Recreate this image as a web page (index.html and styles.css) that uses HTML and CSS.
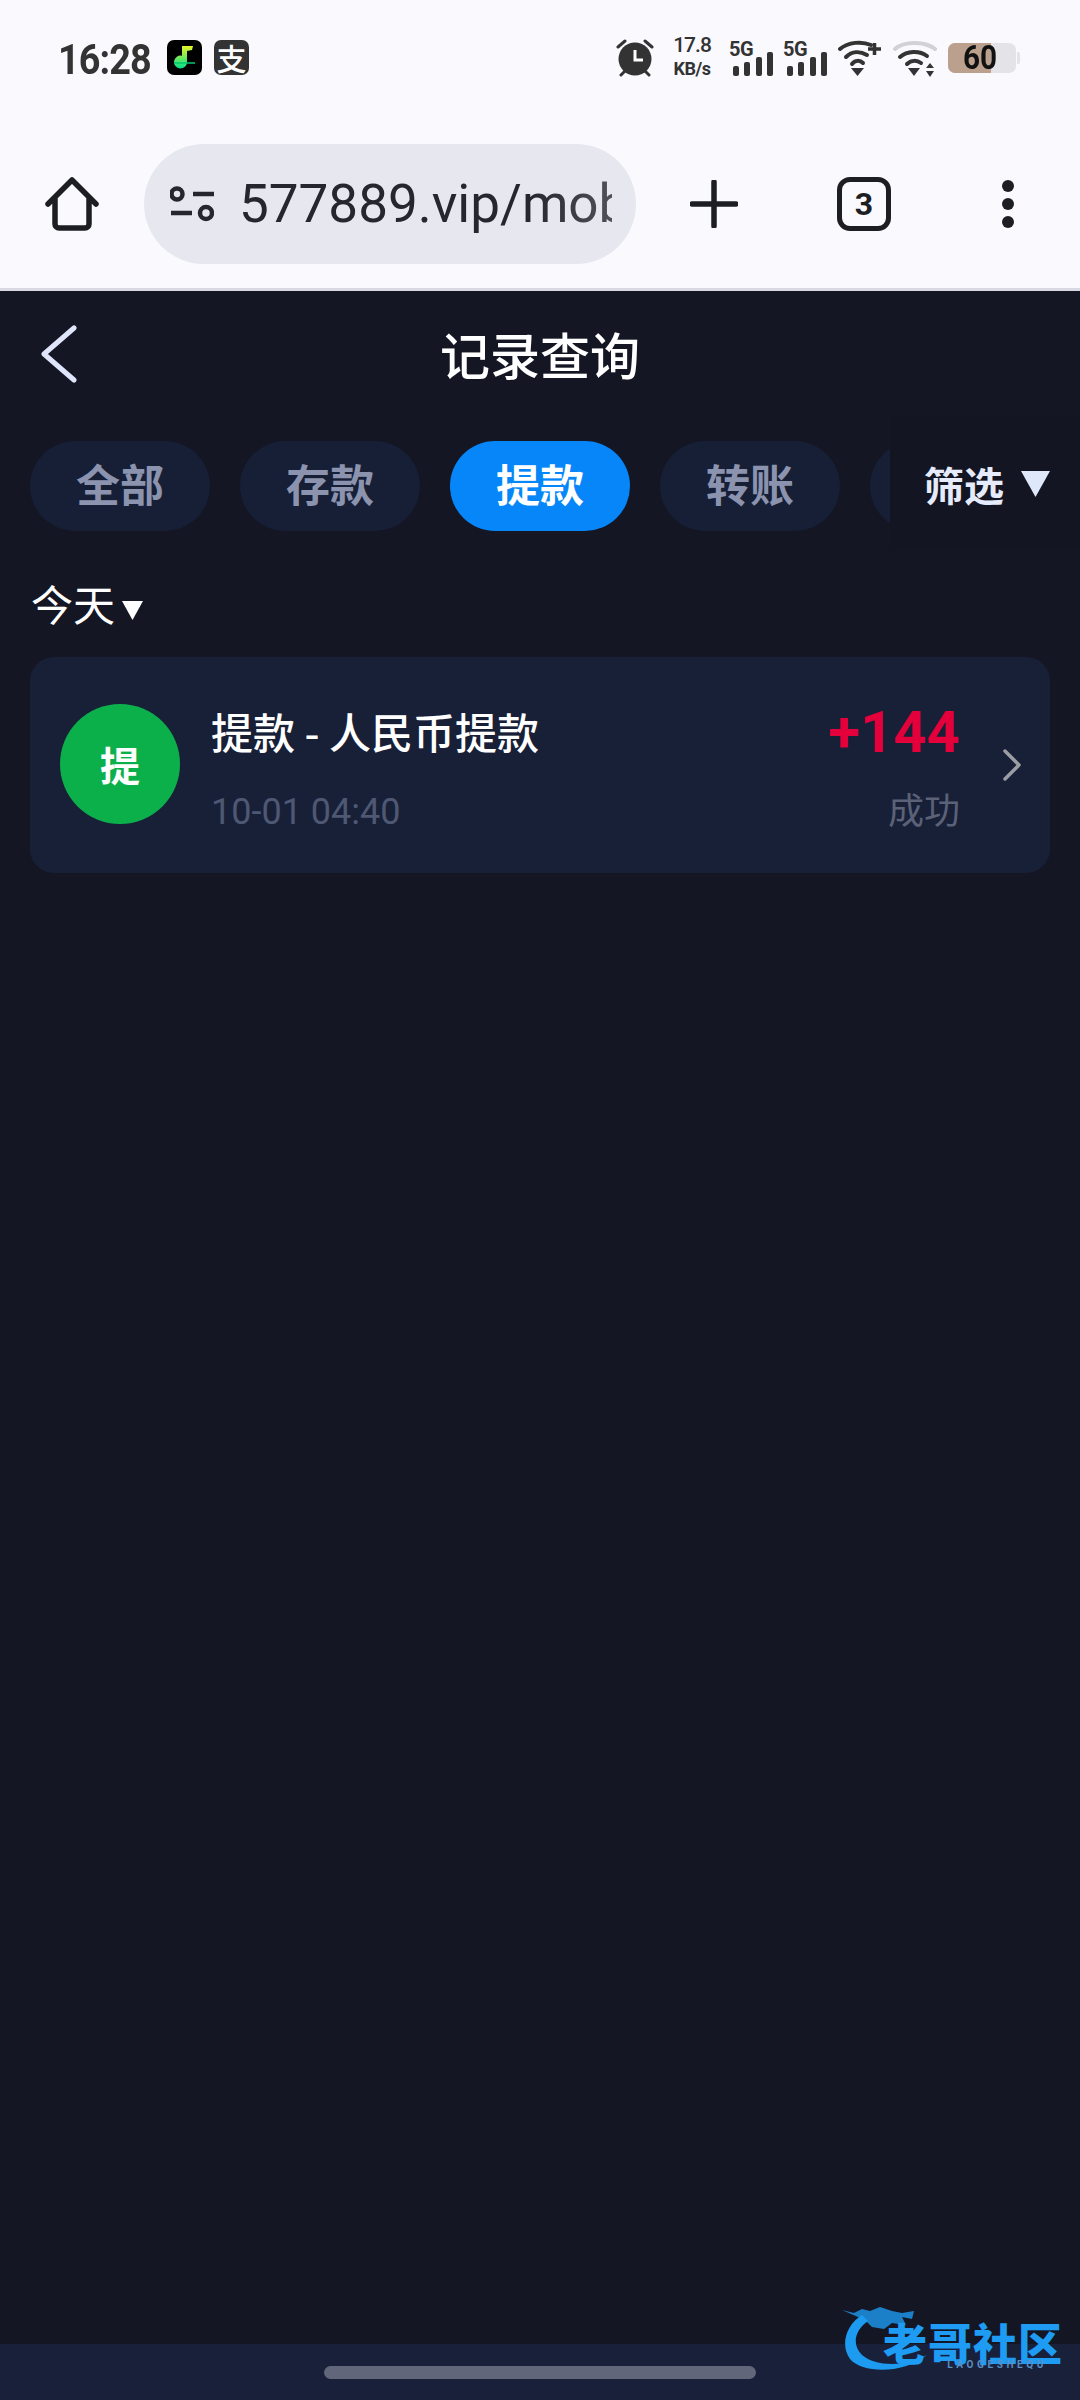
FILE: index.html
```html
<!DOCTYPE html>
<html lang="zh-CN">
<head>
<meta charset="utf-8">
<title>记录查询</title>
<link rel="stylesheet" href="styles.css">
</head>
<body>
<div class="phone">
  <div class="chrome">
    <div class="status">
      <div class="status-left">
        <span class="clock">16:28</span>
        <svg class="app-music" viewBox="0 0 35 35"><defs><linearGradient id="g" x1="0" y1="0" x2="0" y2="1"><stop offset="0" stop-color="#e6f52a"/><stop offset="1" stop-color="#00e08a"/></linearGradient></defs><rect width="35" height="35" rx="7" fill="#000"/><path d="M15 6h11l-1 4-5 1v11a6.500 6.500 0 1 1-5-6.300z" fill="url(#g)"/><path d="M7 23h21" stroke="#00c96f" stroke-width="1.500"/></svg>
        <span class="app-pay">支</span>
      </div>
      <div class="status-right">
        <svg class="ic-alarm" viewBox="0 0 40 38"><circle cx="19" cy="20" r="16.500" fill="#333"/><path d="M19 11v10h8" fill="none" stroke="#fff" stroke-width="3"/><path d="M2 8l7-6M36 8l-7-6M5 36l4-4M33 36l-4-4" stroke="#333" stroke-width="3" stroke-linecap="round"/></svg>
        <div class="speed"><span class="speed-num">17.8</span><span class="speed-unit">KB/s</span></div>
        <div class="sim"><span class="sim-label">5G</span><svg class="bars" viewBox="0 0 40 24"><rect x="0" y="14" width="6" height="10" rx="2"/><rect x="11" y="10" width="6" height="14" rx="2"/><rect x="23" y="5" width="6" height="19" rx="2"/><rect x="34" y="0" width="6" height="24" rx="2"/></svg></div>
        <div class="sim"><span class="sim-label">5G</span><svg class="bars" viewBox="0 0 40 24"><rect x="0" y="14" width="6" height="10" rx="2"/><rect x="11" y="10" width="6" height="14" rx="2"/><rect x="23" y="5" width="6" height="19" rx="2"/><rect x="34" y="0" width="6" height="24" rx="2"/></svg></div>
        <svg class="ic-wifi" viewBox="0 0 44 38"><g fill="none" stroke="#333" stroke-width="4" stroke-linecap="round"><path d="M2 10C10 3 24 2 33 6"/><path d="M8 18C14 12 22 12 29 16"/><path d="M14 25C17 21 22 21 25 24"/></g><path d="M13 29h13l-6.500 8z" fill="#333"/><path d="M30 10h13M36.500 4v12" stroke="#333" stroke-width="3.500"/></svg>
        <svg class="ic-wifi2" viewBox="0 0 44 38"><g fill="none" stroke-width="4" stroke-linecap="round"><path d="M2 10C11 2 32 2 42 10" stroke="#d2d2d6"/><path d="M7 18C14 12 26 11 34 17" stroke="#333"/><path d="M14 25C18 21 24 21 28 24" stroke="#333"/></g><path d="M15 29h12l-6 8z" fill="#333"/><path d="M37 24l4 5h-8zM37 38l4-6h-8z" fill="#333"/></svg>
        <div class="battery"><span class="battery-fill"></span><span class="battery-num">60</span><span class="battery-nub"></span></div>
      </div>
    </div>
    <div class="toolbar">
      <svg class="ic-home" viewBox="0 0 54 54"><path d="M3 27L27 3l24 24M10 22v25a4 4 0 0 0 4 4h26a4 4 0 0 0 4-4V22" fill="none" stroke="#1d1d24" stroke-width="5.500" stroke-linecap="round" stroke-linejoin="round"/></svg>
      <div class="url">
        <svg class="ic-tune" viewBox="0 0 44 38"><g fill="none" stroke="#26262e" stroke-width="4.500"><circle cx="7" cy="9" r="5.500"/><circle cx="36" cy="28" r="6"/><path d="M23 9h21M1 28h21"/></g></svg>
        <span class="url-text">577889.vip/mob</span>
      </div>
      <svg class="ic-plus" viewBox="0 0 48 48"><path d="M24 2v44M2 24h44" stroke="#1d1d24" stroke-width="5.500" stroke-linecap="round"/></svg>
      <div class="tab-count">3</div>
      <div class="dots"><i></i><i></i><i></i></div>
    </div>
  </div>

  <main class="main">
    <header class="head">
      <svg class="back" viewBox="0 0 36 58"><path d="M33 3L3 29l30 26" fill="none" stroke="#dfe6fb" stroke-width="5" stroke-linecap="round" stroke-linejoin="round"/></svg>
      <h1 class="title">记录查询</h1>
    </header>

    <nav class="tabs">
      <a class="tab">全部</a>
      <a class="tab">存款</a>
      <a class="tab tab-on">提款</a>
      <a class="tab">转账</a>
      <a class="tab"></a>
      <div class="filter"><span>筛选</span><svg class="filter-tri" viewBox="0 0 29 26"><path d="M0 0h29L14.500 26z" fill="#dfe7fb"/></svg></div>
    </nav>

    <div class="day"><span>今天</span><svg class="day-tri" viewBox="0 0 21 19"><path d="M0 0h21L10.500 19z" fill="#fff"/></svg></div>

    <section class="card">
      <div class="avatar">提</div>
      <div class="info">
        <div class="info-title">提款 - 人民币提款</div>
        <div class="info-date">10-01 04:40</div>
      </div>
      <div class="money">
        <div class="amount">+144</div>
        <div class="state">成功</div>
      </div>
      <svg class="next" viewBox="0 0 20 32"><path d="M3 2l14 14L3 30" fill="none" stroke="#9b9da3" stroke-width="3.500" stroke-linecap="round" stroke-linejoin="round"/></svg>
    </section>
  </main>

  <footer class="navbar"><span class="handle"></span></footer>

  <div class="logo">
    <svg class="logo-mark" viewBox="0 0 100 70"><path d="M22 12C6 22 0 42 10 56 22 70 62 72 87 52 66 64 36 64 22 52 12 42 14 28 28 18z" fill="#1d9bf0"/><path d="M2 7l12 3 8-4 8 2 10-4 12 4 10 2 12-2-2 8-10-2 4 8-14-2-8 6-12-2-6-6-8-4z" fill="#1d9bf0" opacity=".8"/></svg>
    <div class="logo-text">
      <span class="logo-cn">老哥社区</span>
      <span class="logo-en">LAOGESHEQU</span>
    </div>
  </div>
</div>
</body>
</html>
```
FILE: styles.css
```css
* { box-sizing: border-box; margin: 0; padding: 0; }
html, body { width: 1080px; height: 2400px; overflow: hidden; background: #141624; }
body { font-family: "Noto Sans CJK SC", Roboto, sans-serif; }

.phone { position: relative; width: 1080px; height: 2400px; display: flex; flex-direction: column; }

/* browser chrome */
.chrome { height: 291px; background: #f9f9fe; border-bottom: 3px solid #d9d9e3; flex: none; }
.status { height: 120px; display: flex; justify-content: space-between; padding: 36px 60px 0 60px; }
.status-left { display: flex; align-items: flex-start; height: 44px; }
.clock { font: 700 42px/40px Roboto, sans-serif; color: #333; width: 107px; margin: 4px 0 0 -2px; padding-right: 0; letter-spacing: -1px; transform: scaleX(.9); transform-origin: left center; white-space: nowrap; }
.app-music { width: 35px; height: 35px; margin: 4px 0 0 2px; }
.app-pay { width: 35px; height: 35px; margin: 4px 0 0 12px; border-radius: 7px; background: #333; color: #fff; font: 500 30px/35px "Noto Sans CJK SC", sans-serif; text-align: center; }

.status-right { display: flex; align-items: flex-start; width: 404px; }
.ic-alarm { width: 40px; height: 38px; margin-top: 3px; }
.speed { width: 40px; margin-left: 16px; display: flex; flex-direction: column; align-items: center; color: #333; font-family: Roboto, sans-serif; }
.speed-num { font-size: 21px; line-height: 22px; font-weight: 500; margin-top: -2px; letter-spacing: -1px; }
.speed-unit { font-size: 18px; line-height: 20px; font-weight: 700; margin-top: 3px; letter-spacing: -.5px; }
.sim { position: relative; width: 42px; height: 40px; margin: 0 0 0 19px; }
.sim + .sim { margin-left: 12px; }
.sim-label { display: block; font: 700 20px/20px Roboto, sans-serif; color: #333; margin: 3px 0 0 -2px; letter-spacing: -.5px; }
.bars { display: block; position: absolute; left: 2px; top: 16px; width: 40px; height: 24px; fill: #333; }
.ic-wifi { width: 44px; height: 38px; margin: 3px 0 0 11px; }
.ic-wifi2 { width: 44px; height: 38px; margin: 3px 0 0 11px; }
.battery { position: relative; width: 68px; height: 30px; margin: 7px 0 0 11px; background: #e3e3e8; border-radius: 7px; }
.battery-fill { position: absolute; left: 0; top: 0; bottom: 0; width: 43px; background: #bca08e; border-radius: 7px 0 0 7px; }
.battery-num { position: absolute; left: 0; right: 4px; top: 0; text-align: center; font: 700 33px/30px Roboto, sans-serif; color: #111; transform: scaleX(.9); }
.battery-nub { position: absolute; right: -4px; top: 9px; width: 3px; height: 12px; background: #e3e3e8; border-radius: 0 2px 2px 0; }

.toolbar { height: 168px; display: flex; align-items: center; padding: 0 0 0 45px; }
.ic-home { width: 54px; height: 54px; flex: none; }
.url { width: 492px; height: 120px; margin-left: 45px; border-radius: 60px; background: #e7e7ef; display: flex; align-items: center; padding: 0 24px 0 26px; flex: none; }
.ic-tune { width: 44px; height: 38px; flex: none; }
.url-text { margin-left: 25px; font: 400 53px/64px Roboto, sans-serif; color: #26262e; white-space: nowrap; overflow: hidden; flex: 1; -webkit-mask-image: linear-gradient(90deg, #000 78%, rgba(0,0,0,.78) 100%); mask-image: linear-gradient(90deg, #000 78%, rgba(0,0,0,.78) 100%); }
.ic-plus { width: 48px; height: 48px; margin-left: 54px; flex: none; }
.tab-count { width: 54px; height: 54px; margin-left: 99px; border: 5.500px solid #1d1d24; border-radius: 13px; display: flex; align-items: center; justify-content: center; font: 700 32px/1 Roboto, sans-serif; color: #1d1d24; flex: none; }
.dots { margin-left: 111px; display: flex; flex-direction: column; gap: 6px; flex: none; }
.dots i { display: block; width: 12px; height: 12px; border-radius: 50%; background: #1d1d24; }

/* page */
.main { flex: 1; display: flex; flex-direction: column; background: #141624; }
.head { height: 128px; display: grid; grid-template-columns: 1fr auto 1fr; align-items: center; padding: 0 41px; }
.back { width: 36px; height: 58px; margin-top: -2px; }
.title { font-size: 50px; font-weight: 500; line-height: 60px; color: #fff; margin-bottom: 4px; }

.tabs { position: relative; display: flex; gap: 30px; margin-top: 22px; padding-left: 30px; height: 90px; }
.tab { flex: none; width: 180px; height: 90px; border-radius: 45px; background: #161f36; color: #8b93ae; font-size: 44px; font-weight: 700; line-height: 84px; text-align: center; }
.tab-on { background: #0686f8; color: #fff; }
.filter { position: absolute; right: 0; top: -24px; width: 190px; height: 133px; background: #131522; display: flex; align-items: center; padding-left: 34px; color: #e6ebfb; font-size: 40px; font-weight: 700; line-height: 1; }
.filter-tri { width: 29px; height: 26px; margin-left: 17px; }

.day { display: flex; align-items: flex-end; margin: 42px 0 0 31px; height: 60px; color: #fff; font-size: 42px; line-height: 60px; }
.day-tri { width: 21px; height: 19px; margin: 0 0 13px 7px; }

.card { display: flex; align-items: stretch; height: 216px; margin: 24px 30px 0 30px; padding: 0 28px 0 30px; background: #182038; border-radius: 24px; }
.avatar { flex: none; width: 120px; height: 120px; margin-top: 47px; border-radius: 50%; background: #0bb04a; color: #fff; font-size: 40px; font-weight: 700; line-height: 120px; text-align: center; }
.info { flex: 1; margin-left: 31px; }
.info-title { margin-top: 44px; font-size: 42px; font-weight: 500; line-height: 60px; color: #fff; }
.info-date { margin-top: 27px; font: 400 36px/48px Roboto, sans-serif; color: #4f5873; }
.money { text-align: right; }
.amount { margin-top: 41px; font: 700 58px/68px Roboto, sans-serif; color: #e4003a; }
.state { margin-top: 16px; font-size: 36px; line-height: 52px; color: #5b6278; }
.next { width: 20px; height: 32px; margin: 92px 0 0 42px; flex: none; }

.navbar { flex: none; height: 56px; background: #18203a; display: flex; justify-content: center; padding-top: 22px; }
.handle { width: 432px; height: 13px; border-radius: 7px; background: #62667a; }

.logo { position: absolute; left: 840px; top: 2303px; width: 232px; height: 72px; }
.logo-mark { display: block; width: 100px; height: 70px; }
.logo-text { position: absolute; left: 41px; top: 21px; display: flex; flex-direction: column; align-items: flex-end; width: 182px; }
.logo-cn { font-size: 44px; font-weight: 900; line-height: 36px; color: #1e9bf2; white-space: nowrap; letter-spacing: 1px; }
.logo-en { font: 700 10px/10px Roboto, sans-serif; letter-spacing: 3.600px; color: #5a8ec4; margin: 0 16px 0 0; }
```
